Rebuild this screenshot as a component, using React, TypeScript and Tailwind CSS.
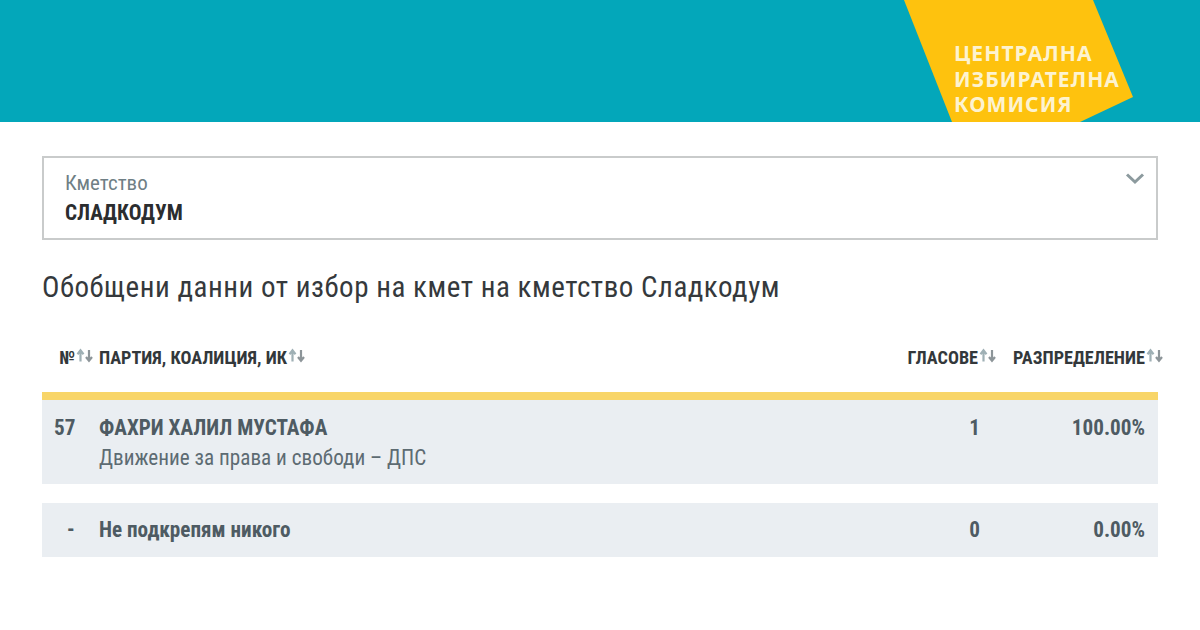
import React from 'react';

const SortIcon = () => (
  <svg width="18" height="15" viewBox="0 0 18 15" className="shrink-0 -mt-[5px]" fill="none">
    <path d="M5.5 13.5V3.5M2.5 6.2l3-3.8 3 3.8" stroke="#9fb0b5" strokeWidth="2.2" />
    <path d="M14 2v10M11 9l3 3.8L17 9" stroke="#8d9599" strokeWidth="2.2" />
  </svg>
);

const rowCell = 'font-bold text-[21.2px] leading-[30px] text-[#4e5b63]';

const App: React.FC = () => {
  return (
    <div className="w-[1200px] h-[630px] bg-white overflow-hidden font-['Roboto',sans-serif] [font-stretch:75%]">
      <header className="relative h-[122px] bg-[#03a7ba]">
        <svg className="absolute left-[904px] top-0" width="230" height="122" viewBox="0 0 230 122">
          <polygon points="0,0 189,0 229,97 176,122 48,122" fill="#fec20e" />
        </svg>
        <div className="absolute left-[954px] top-[41px] font-['Noto_Sans',sans-serif] [font-stretch:100%] font-bold text-[21px] leading-[25.5px] tracking-[1.05px] text-[#fdf3d0]">
          <div>ЦЕНТРАЛНА</div>
          <div>ИЗБИРАТЕЛНА</div>
          <div>КОМИСИЯ</div>
        </div>
      </header>

      <main className="px-[42px] pt-[34px]">
        <div className="relative h-[84px] border-2 border-[#c9cbcb] pl-[21px] pt-[12px]">
          <div className="text-[21px] leading-[26px] text-[#6f7f85]">Кметство</div>
          <div className="mt-[2px] text-[21.2px] leading-[30px] font-bold text-[#2b2d2f]">СЛАДКОДУМ</div>
          <svg className="absolute right-[11px] top-[14px]" width="20" height="13" viewBox="0 0 20 13" fill="none">
            <path d="M2 2.5 10 10l8-7.5" stroke="#8c9a9e" strokeWidth="3" />
          </svg>
        </div>

        <h1 className="mt-[29px] text-[29px] leading-[36px] tracking-[0.52px] text-[#35393c]">
          Обобщени данни от избор на кмет на кметство Сладкодум
        </h1>

        <div className="mt-[36px] flex h-[34px] items-center text-[18.2px] font-bold text-[#33383b]">
          <div className="flex w-[57px] items-center justify-end pr-[6px]">
            <span>№</span>
            <SortIcon />
          </div>
          <div className="flex flex-1 items-center">
            <span>ПАРТИЯ, КОАЛИЦИЯ, ИК</span>
            <SortIcon />
          </div>
          <div className="flex items-center">
            <span>ГЛАСОВЕ</span>
            <SortIcon />
          </div>
          <div className="ml-[17px] -mr-[5px] flex items-center">
            <span>РАЗПРЕДЕЛЕНИЕ</span>
            <SortIcon />
          </div>
        </div>

        <div className="mt-[17px] h-[8px] bg-[#f8d568]" />

        <div className="flex h-[84px] bg-[#eaeef2] pt-[13px]">
          <div className={`${rowCell} w-[57px] pl-[12px]`}>57</div>
          <div className="flex-1">
            <div className={rowCell}>ФАХРИ ХАЛИЛ МУСТАФА</div>
            <div className="text-[21.2px] leading-[30px] text-[#5d6b72]">Движение за права и свободи – ДПС</div>
          </div>
          <div className={`${rowCell} w-[100px] text-right`}>1</div>
          <div className={`${rowCell} w-[178px] pr-[13px] text-right`}>100.00%</div>
        </div>

        <div className="mt-[19px] flex h-[54px] items-center bg-[#eaeef2]">
          <div className={`${rowCell} w-[57px] pl-[25px]`}>-</div>
          <div className={`${rowCell} flex-1`}>Не подкрепям никого</div>
          <div className={`${rowCell} w-[100px] text-right`}>0</div>
          <div className={`${rowCell} w-[178px] pr-[13px] text-right`}>0.00%</div>
        </div>
      </main>
    </div>
  );
};

export default App;
